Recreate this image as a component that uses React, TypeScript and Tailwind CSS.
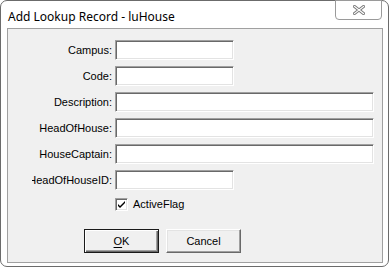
const field =
  "h-[20px] bg-white border border-t-[#a0a0a0] border-l-[#a0a0a0] border-b-white border-r-white shadow-[inset_1px_1px_0_#696969,inset_-1px_-1px_0_#e3e3e3]";

function Row({ label, wide }: { label: string; wide?: boolean }) {
  return (
    <div className="flex items-center h-[20px]">
      <div className="ml-[24px] w-[80px] flex justify-end overflow-hidden whitespace-nowrap text-[11px] text-black">
        {label}
      </div>
      <div className={`ml-[3px] ${field} ${wide ? "w-[259px]" : "w-[119px]"}`} />
    </div>
  );
}

function CloseGlyph() {
  return (
    <svg width="12" height="10" viewBox="0 0 12 10">
      <path
        d="M1.5 1.5 L10.5 8.5 M10.5 1.5 L1.5 8.5"
        stroke="#7a7a7a"
        strokeWidth="3"
        strokeLinecap="square"
      />
      <path
        d="M1.5 1.5 L10.5 8.5 M10.5 1.5 L1.5 8.5"
        stroke="#ffffff"
        strokeWidth="1.2"
        strokeLinecap="square"
      />
    </svg>
  );
}

function Button({ children, isDefault }: { children: React.ReactNode; isDefault?: boolean }) {
  return (
    <div
      className={`w-[75px] h-[24px] flex items-center justify-center text-[11px] text-black bg-[#f0f0f0] border ${
        isDefault
          ? "border-[#1a1a1a] shadow-[inset_1px_1px_0_#ffffff,inset_-1px_-1px_0_#696969,inset_-2px_-2px_0_#a0a0a0]"
          : "border-t-white border-l-white border-b-[#696969] border-r-[#696969] shadow-[inset_-1px_-1px_0_#a0a0a0,inset_1px_1px_0_#e3e3e3]"
      }`}
    >
      {children}
    </div>
  );
}

export default function App() {
  return (
    <div className="w-[389px] h-[267px] overflow-hidden bg-white">
      <div
        className="relative w-[389px] h-[267px] bg-white border border-[#6b6b6b] rounded-[7px] flex flex-col"
        style={{ fontFamily: '"Liberation Sans", Arial, sans-serif' }}
      >
        <div className="h-[27px] flex items-center pl-[7px] pt-[4px]">
          <span
            className="text-[12px] text-black"
            style={{ fontFamily: '"Noto Sans", "Liberation Sans", sans-serif' }}
          >
            Add Lookup Record - luHouse
          </span>
        </div>
        <div className="absolute top-[-1px] right-[6px] w-[47px] h-[20px] bg-white border border-[#9a9a9a] rounded-b-[4px] flex items-center justify-center">
          <CloseGlyph />
        </div>
        <div className="ml-[6px] mr-[5px] h-[235px] bg-[#f0f0f0] border border-[#a0a0a0] flex flex-col">
          <div className="pt-[11px] flex flex-col gap-[6px]">
            <Row label="Campus:" />
            <Row label="Code:" />
            <Row label="Description:" wide />
            <Row label="HeadOfHouse:" wide />
            <Row label="HouseCaptain:" wide />
            <Row label="HeadOfHouseID:" />
          </div>
          <div className="mt-[8px] ml-[107px] flex items-center gap-[5px] h-[13px]">
            <div className="w-[13px] h-[13px] bg-white border border-t-[#a0a0a0] border-l-[#a0a0a0] border-b-white border-r-white shadow-[inset_1px_1px_0_#696969,inset_-1px_-1px_0_#e3e3e3] flex items-center justify-center">
              <svg width="7" height="7" viewBox="0 0 7 7">
                <path d="M0 3 L0 5 L2 7 L7 2 L7 0 L2 5 Z" fill="#000" />
              </svg>
            </div>
            <span className="text-[11px] text-black">ActiveFlag</span>
          </div>
          <div className="mt-[18px] ml-[76px] flex gap-[7px]">
            <Button isDefault>
              <span>
                <span className="underline underline-offset-2">O</span>K
              </span>
            </Button>
            <Button>Cancel</Button>
          </div>
        </div>
      </div>
    </div>
  );
}
